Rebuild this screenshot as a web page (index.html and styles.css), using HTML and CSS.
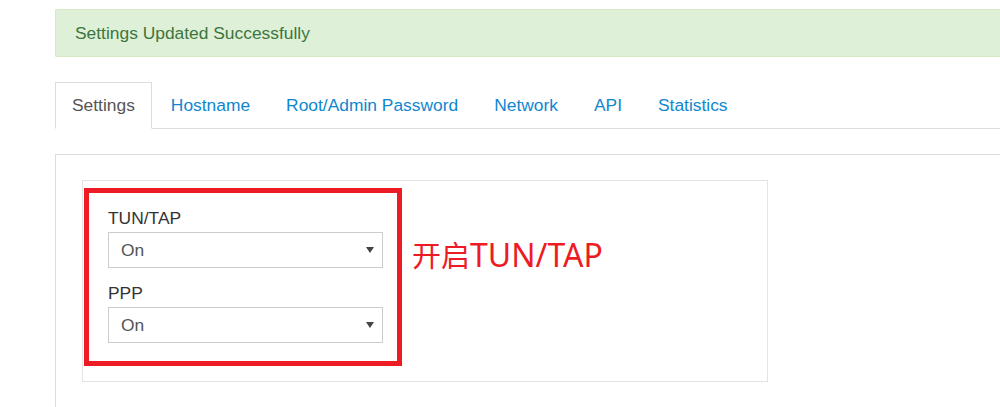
FILE: index.html
```html
<!DOCTYPE html>
<html lang="en">
<head>
<meta charset="utf-8">
<title>Settings</title>
<link rel="stylesheet" href="styles.css">
</head>
<body>
<div class="page">
  <div class="alert">Settings Updated Successfully</div>

  <ul class="tabs">
    <li class="tab active">Settings</li>
    <li class="tab"><a href="#">Hostname</a></li>
    <li class="tab"><a href="#">Root/Admin Password</a></li>
    <li class="tab"><a href="#">Network</a></li>
    <li class="tab"><a href="#">API</a></li>
    <li class="tab"><a href="#">Statistics</a></li>
  </ul>

  <div class="panel">
    <div class="well">
      <div class="form-group">
        <label class="label">TUN/TAP</label>
        <div class="select-wrap">
          <select class="select"><option>On</option><option>Off</option></select>
          <svg class="caret" width="8" height="6" viewBox="0 0 8 6"><path d="M0 0H8L4 6Z" fill="#444"/></svg>
        </div>
      </div>
      <div class="form-group">
        <label class="label">PPP</label>
        <div class="select-wrap">
          <select class="select"><option>On</option><option>Off</option></select>
          <svg class="caret" width="8" height="6" viewBox="0 0 8 6"><path d="M0 0H8L4 6Z" fill="#444"/></svg>
        </div>
      </div>

      <div class="mark-box"></div>
      <div class="mark-text"><span class="mark-cjk">开启</span><span class="mark-latin">TUN/TAP</span></div>
    </div>
  </div>
</div>
</body>
</html>
```
FILE: styles.css
```css
* { box-sizing: border-box; }

html, body {
  margin: 0;
  padding: 0;
  background: #fff;
  overflow: hidden;
}

body {
  font-family: "Liberation Sans", Arial, sans-serif;
  font-size: 17.4px;
  color: #333;
}

.page {
  padding: 9px 0 0 55px;
}

.alert {
  height: 48px;
  background: #dff0d8;
  border: 1px solid #d6e9c6;
  border-right: none;
  color: #3c763d;
  padding: 0 19px;
  display: flex;
  align-items: center;
  border-radius: 2px 0 0 2px;
}

.tabs {
  list-style: none;
  margin: 25px 0 0;
  padding: 0;
  display: flex;
  border-bottom: 1px solid #ddd;
}

.tab {
  height: 47px;
  margin: 0 2px -1px 0;
  padding: 0 16px;
  border: 1px solid transparent;
  display: flex;
  align-items: center;
}

.tab a {
  color: #0f87d0;
  text-decoration: none;
}

.tab.active {
  color: #555;
  background: #fff;
  border-color: #ddd;
  border-bottom-color: #fff;
}

.panel {
  margin-top: 25px;
  border: 1px solid #ddd;
  border-right: none;
  padding: 25px 26px 40px;
}

.well {
  position: relative;
  width: 686px;
  border: 1px solid #e3e3e3;
  padding: 25px 25px 25px;
}

.form-group {
  margin-bottom: 13px;
}

.label {
  display: block;
  line-height: 24px;
  margin-bottom: 2px;
  color: #333;
}

.select-wrap {
  position: relative;
  width: 275px;
}

.select {
  display: block;
  width: 275px;
  height: 36px;
  border: 1px solid #ccc;
  border-radius: 0;
  background: #fff;
  padding: 0 12px;
  font-family: "Liberation Sans", Arial, sans-serif;
  font-size: 17.4px;
  color: #555;
  appearance: none;
  -webkit-appearance: none;
  outline: none;
}

.caret {
  position: absolute;
  right: 9px;
  top: 15px;
  pointer-events: none;
}

.mark-box {
  position: absolute;
  left: 1px;
  top: 7px;
  width: 318px;
  height: 178px;
  border: 5px solid #ed1c24;
}

.mark-text {
  position: absolute;
  left: 329px;
  top: 58px;
  line-height: 30px;
  color: #ed1c24;
  white-space: nowrap;
}

.mark-cjk {
  font-family: "Noto Sans CJK SC", sans-serif;
  font-size: 29px;
}

.mark-latin {
  font-family: "Noto Sans", "Noto Sans CJK SC", sans-serif;
  font-size: 32px;
}
```
